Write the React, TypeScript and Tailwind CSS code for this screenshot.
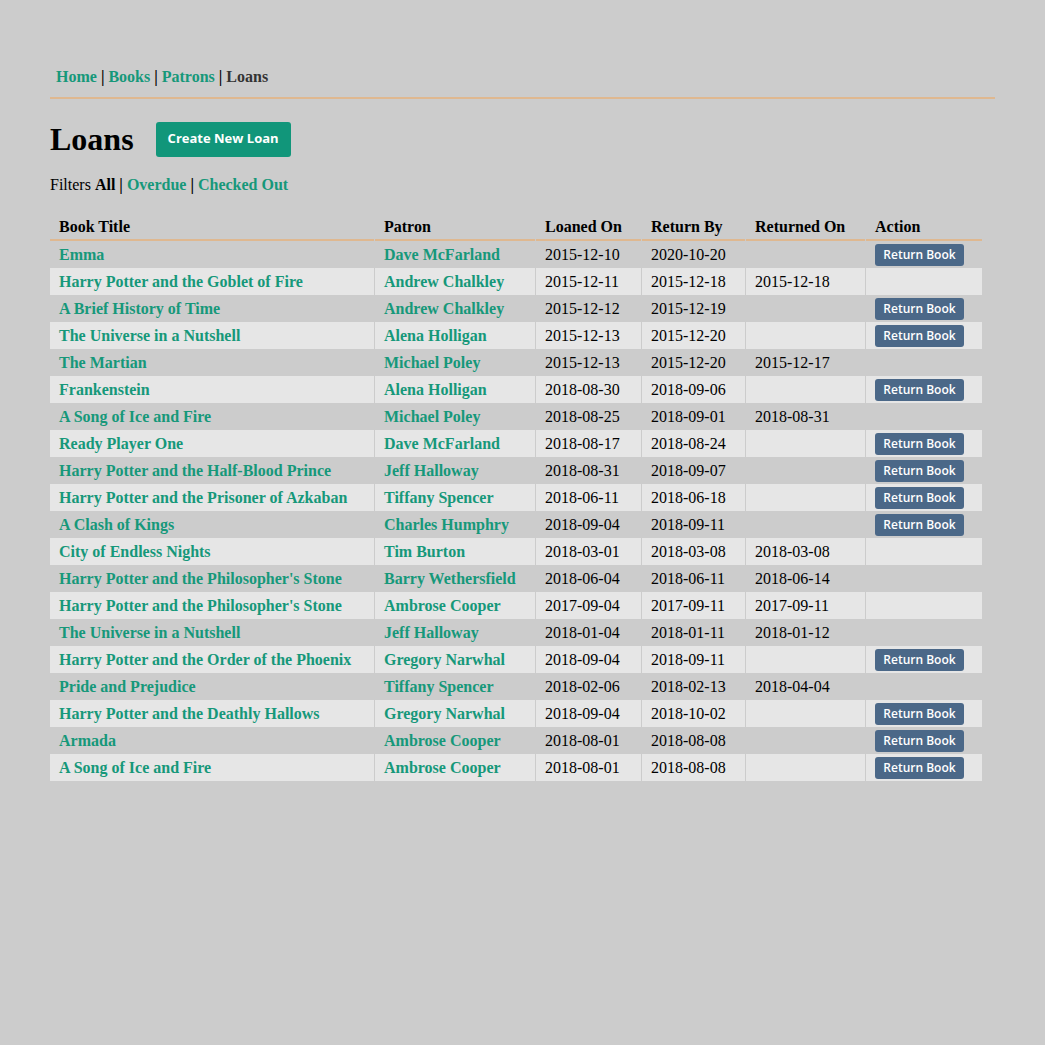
const loans = [
  ['Emma', 'Dave McFarland', '2015-12-10', '2020-10-20', ''],
  ['Harry Potter and the Goblet of Fire', 'Andrew Chalkley', '2015-12-11', '2015-12-18', '2015-12-18'],
  ['A Brief History of Time', 'Andrew Chalkley', '2015-12-12', '2015-12-19', ''],
  ['The Universe in a Nutshell', 'Alena Holligan', '2015-12-13', '2015-12-20', ''],
  ['The Martian', 'Michael Poley', '2015-12-13', '2015-12-20', '2015-12-17'],
  ['Frankenstein', 'Alena Holligan', '2018-08-30', '2018-09-06', ''],
  ['A Song of Ice and Fire', 'Michael Poley', '2018-08-25', '2018-09-01', '2018-08-31'],
  ['Ready Player One', 'Dave McFarland', '2018-08-17', '2018-08-24', ''],
  ['Harry Potter and the Half-Blood Prince', 'Jeff Halloway', '2018-08-31', '2018-09-07', ''],
  ['Harry Potter and the Prisoner of Azkaban', 'Tiffany Spencer', '2018-06-11', '2018-06-18', ''],
  ['A Clash of Kings', 'Charles Humphry', '2018-09-04', '2018-09-11', ''],
  ['City of Endless Nights', 'Tim Burton', '2018-03-01', '2018-03-08', '2018-03-08'],
  ["Harry Potter and the Philosopher's Stone", 'Barry Wethersfield', '2018-06-04', '2018-06-11', '2018-06-14'],
  ["Harry Potter and the Philosopher's Stone", 'Ambrose Cooper', '2017-09-04', '2017-09-11', '2017-09-11'],
  ['The Universe in a Nutshell', 'Jeff Halloway', '2018-01-04', '2018-01-11', '2018-01-12'],
  ['Harry Potter and the Order of the Phoenix', 'Gregory Narwhal', '2018-09-04', '2018-09-11', ''],
  ['Pride and Prejudice', 'Tiffany Spencer', '2018-02-06', '2018-02-13', '2018-04-04'],
  ['Harry Potter and the Deathly Hallows', 'Gregory Narwhal', '2018-09-04', '2018-10-02', ''],
  ['Armada', 'Ambrose Cooper', '2018-08-01', '2018-08-08', ''],
  ['A Song of Ice and Fire', 'Ambrose Cooper', '2018-08-01', '2018-08-08', ''],
];

const link = 'text-[#16987a] font-bold';

export default function App() {
  return (
    <div className="min-h-[1045px] bg-[#cccccc] font-['Liberation_Serif',serif] text-[16px] text-black">
      <div className="pl-[50px] pt-[66px] w-[995px]">
        <nav className="pl-[6px] pb-[9px] border-b-2 border-[#dfb890] font-bold leading-[22px]">
          <a className={link}>Home</a> | <a className={link}>Books</a> | <a className={link}>Patrons</a> |{' '}
          <span className="text-[#333]">Loans</span>
        </nav>

        <div className="flex items-center mt-[22px] gap-[22px]">
          <h1 className="text-[32px] font-bold leading-[36px]">Loans</h1>
          <button className="h-[35px] w-[135px] rounded-[3px] bg-[#11967a] text-white text-[13px] font-bold font-['Open_Sans',sans-serif]">
            Create New Loan
          </button>
        </div>

        <p className="mt-[18px] leading-[20px]">
          Filters <b>All</b> <b>|</b> <a className={link}>Overdue</a> <b>|</b> <a className={link}>Checked Out</a>
        </p>

        <table className="mt-[16px] w-[934px] border-separate [border-spacing:1px_0] -ml-px text-left">
          <thead>
            <tr className="h-[30px]">
              {['Book Title', 'Patron', 'Loaned On', 'Return By', 'Returned On', 'Action'].map((h) => (
                <th key={h} className="px-[9px] pt-[4px] font-bold border-b-2 border-[#dfb890] align-middle">
                  {h}
                </th>
              ))}
            </tr>
          </thead>
          <tbody>
            {loans.map((l, i) => (
              <tr key={i} className={`h-[27px] ${i % 2 ? 'bg-[#e6e6e6]' : ''}`}>
                <td className={`px-[9px] w-[324px] ${link}`}>{l[0]}</td>
                <td className={`px-[9px] w-[160px] ${link}`}>{l[1]}</td>
                <td className="px-[9px] w-[105px]">{l[2]}</td>
                <td className="px-[9px] w-[103px]">{l[3]}</td>
                <td className="px-[9px] w-[119px]">{l[4]}</td>
                <td className="px-[9px] py-0">
                  {!l[4] && (
                    <button className="h-[22px] w-[89px] rounded-[3px] bg-[#4b6888] text-white text-[12px] font-semibold font-['Open_Sans',sans-serif] block">
                      Return Book
                    </button>
                  )}
                </td>
              </tr>
            ))}
          </tbody>
        </table>
      </div>
    </div>
  );
}
